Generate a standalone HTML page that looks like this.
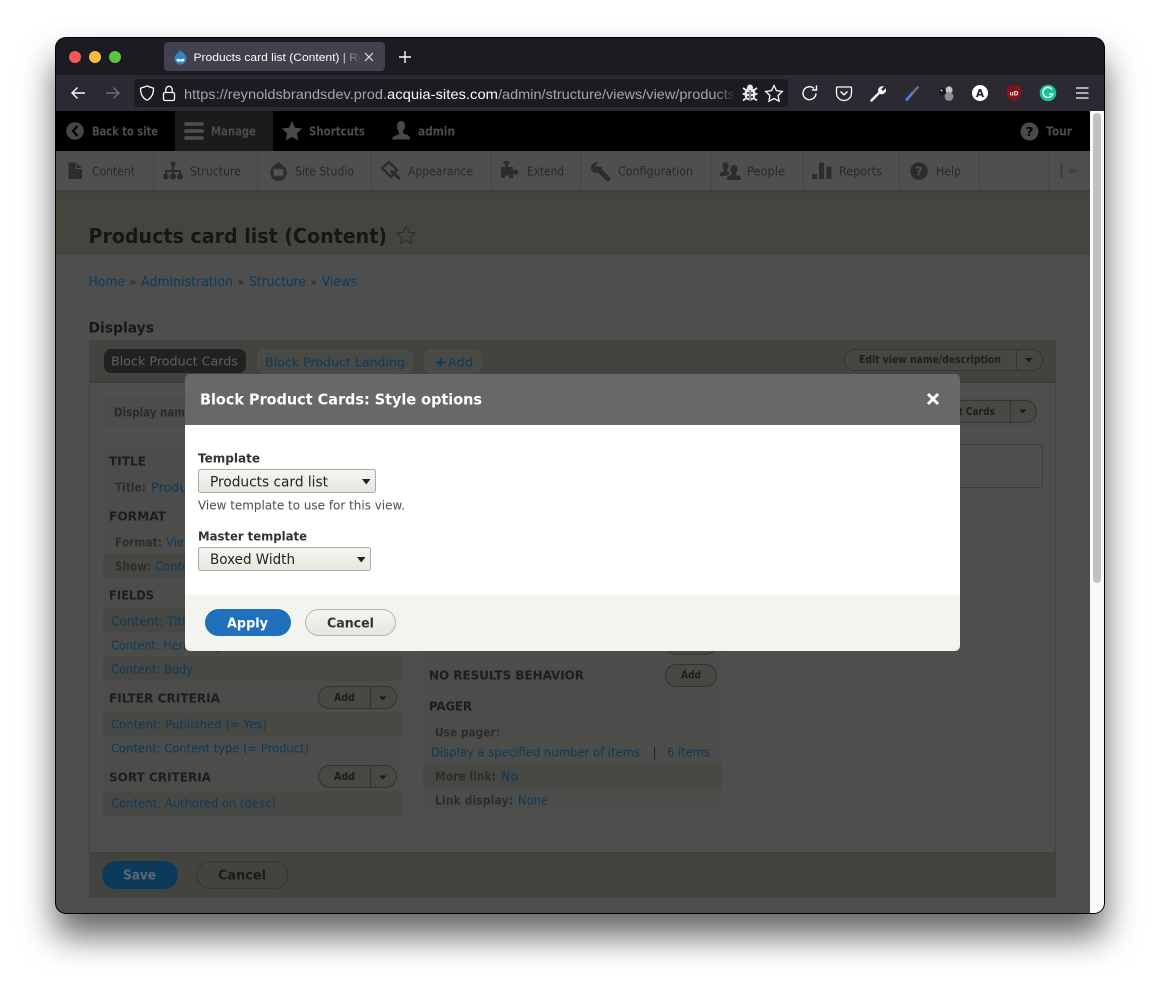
<!DOCTYPE html>
<html lang="en"><head><meta charset="utf-8"><title>Products card list (Content)</title>
<style>
html,body{margin:0;padding:0;background:#fff;width:1160px;height:987px;overflow:hidden}
svg{display:block}
text{font-family:"DejaVu Sans","Liberation Sans",sans-serif;white-space:pre}
.ui{font-family:"Liberation Sans",sans-serif}
.b{font-weight:bold}
.l{fill:#0c3a5b;font-size:12px}
.h{fill:#1d1d1d;font-size:12.5px;font-weight:bold}
.k{fill:#2d2d2d;font-size:12px;font-weight:bold}
.n{fill:#292929;font-size:12px}
.a{fill:#4d4d4d;font-size:12px;font-weight:bold}
</style></head><body>
<svg width="1160" height="987" viewBox="0 0 1160 987" xmlns="http://www.w3.org/2000/svg">
<defs>
<filter id="sh" x="-10%" y="-10%" width="120%" height="125%"><feDropShadow dx="0" dy="22" stdDeviation="17" flood-color="#000" flood-opacity=".6"/></filter>
<clipPath id="win"><rect x="56" y="38" width="1048" height="875" rx="10"/></clipPath>
<clipPath id="tabclip"><rect x="190" y="45" width="170" height="24"/></clipPath>
<clipPath id="urlclip"><rect x="180" y="82" width="555" height="24"/></clipPath>
<linearGradient id="fade1"><stop offset="0" stop-color="#42414d" stop-opacity="0"/><stop offset="1" stop-color="#42414d"/></linearGradient>
<linearGradient id="fade2"><stop offset="0" stop-color="#1c1b22" stop-opacity="0"/><stop offset="1" stop-color="#1c1b22"/></linearGradient>
<linearGradient id="sel" x1="0" y1="0" x2="0" y2="1"><stop offset="0" stop-color="#f6f6f2"/><stop offset="1" stop-color="#e7e7df"/></linearGradient>
<linearGradient id="btn" x1="0" y1="0" x2="0" y2="1"><stop offset="0" stop-color="#f5f5f2"/><stop offset="1" stop-color="#e6e6df"/></linearGradient>
</defs>

<rect x="55" y="37" width="1050" height="877" rx="11" fill="#000" filter="url(#sh)"/>
<g clip-path="url(#win)">
<!-- browser chrome -->
<rect x="56" y="38" width="1048" height="37" fill="#1c1b22"/>
<rect x="56" y="75" width="1048" height="36" fill="#2b2a33"/>
<circle cx="75" cy="57" r="6" fill="#f25a52"/><circle cx="95" cy="57" r="6" fill="#fdbb3c"/><circle cx="115" cy="57" r="6" fill="#5ac83f"/>
<rect x="164" y="42" width="221" height="29" rx="4" fill="#42414d"/>
<path d="M180.500 50c1 2.500 6 4 6 8.500a6 6 0 0 1-12 0c0-4.500 5-6 6-8.500z" fill="#2f86c5"/>
<path d="M176.500 59.500c1.500-1.500 3-.5 4 .2 1-.7 2.500-1.700 4-.2.500 1.800-2 3-4 1.500-2 1.500-4.500.3-4-1.500z" fill="#fff"/>
<g clip-path="url(#tabclip)"><text class="ui" x="193.500" y="61" font-size="11" fill="#fbfbfe" textLength="206" lengthAdjust="spacingAndGlyphs">Products card list (Content) | Reynolds</text></g>
<rect x="338" y="45" width="23" height="24" fill="url(#fade1)"/>
<path d="M365 53l8 8M373 53l-8 8" stroke="#e8e8ea" stroke-width="1.100" fill="none"/>
<path d="M405 51v12M399 57h12" stroke="#fbfbfe" stroke-width="1.400" fill="none"/>

<path d="M85 93H72M77.500 87.500L72 93l5.500 5.500" stroke="#fbfbfe" stroke-width="1.400" fill="none"/>
<path d="M119 93h-13M113.500 87.500L119 93l-5.500 5.500" stroke="#6f6e76" stroke-width="1.400" fill="none"/>
<rect x="134" y="79" width="654" height="28" rx="4" fill="#1c1b22"/>
<path d="M147 86l6.500 2.200c0 5-1.500 9.500-6.500 12-5-2.500-6.500-7-6.500-12z" stroke="#fbfbfe" stroke-width="1.300" fill="none"/>
<rect x="163.500" y="92.500" width="11" height="8" rx="1.500" stroke="#fbfbfe" stroke-width="1.300" fill="none"/>
<path d="M165.800 92.500v-3a3.200 3.200 0 0 1 6.400 0v3" stroke="#fbfbfe" stroke-width="1.300" fill="none"/>
<g clip-path="url(#urlclip)"><text class="ui" x="184" y="99" font-size="14" fill="#a4a4a8" textLength="203" lengthAdjust="spacingAndGlyphs">https://reynoldsbrandsdev.prod.</text>
<text class="ui" x="387" y="99" font-size="14" fill="#fbfbfe" textLength="111" lengthAdjust="spacingAndGlyphs">acquia-sites.com</text>
<text class="ui" x="498" y="99" font-size="14" fill="#a4a4a8" textLength="237" lengthAdjust="spacingAndGlyphs">/admin/structure/views/view/products</text></g>
<rect x="715" y="82" width="21" height="24" fill="url(#fade2)"/>
<!-- bug -->
<ellipse cx="750" cy="94" rx="5.500" ry="6.500" fill="#e8e8ea"/><circle cx="750" cy="87.500" r="3" fill="#e8e8ea"/>
<path d="M743 88l3.500 2.500M757 88l-3.500 2.500M742.500 94h15M743 100.500l3.500-2.500M757 100.500l-3.500-2.500" stroke="#e8e8ea" stroke-width="1.800"/>
<path d="M750 90v10" stroke="#1c1b22" stroke-width="1"/><circle cx="748" cy="93" r="1" fill="#1c1b22"/><circle cx="752" cy="93" r="1" fill="#1c1b22"/><circle cx="748" cy="97" r="1" fill="#1c1b22"/><circle cx="752" cy="97" r="1" fill="#1c1b22"/>
<path d="M774 85.500l2.500 5.200 5.800.8-4.200 4 1 5.700-5.100-2.700-5.100 2.700 1-5.700-4.200-4 5.800-.8z" stroke="#fbfbfe" stroke-width="1.300" fill="none"/>
<path d="M816 93.500a6.500 6.500 0 1 1-2-5M816.500 85.500v4.500H812" stroke="#fbfbfe" stroke-width="1.400" fill="none"/>
<path d="M837.500 87h13a1 1 0 0 1 1 1v5a7.500 7.500 0 0 1-15 0v-5a1 1 0 0 1 1-1z" stroke="#fbfbfe" stroke-width="1.300" fill="none"/><path d="M840.500 91.500l3.500 3.300 3.500-3.300" stroke="#fbfbfe" stroke-width="1.400" fill="none"/>
<path d="M871.500 100.500l7.500-7.500" stroke="#fbfbfe" stroke-width="2.400" stroke-linecap="round"/><path d="M878 91a4.500 4.500 0 0 1 6-4.500l-2.800 2.800 1.800 1.800 2.800-2.800A4.500 4.500 0 0 1 880 94z" fill="#fbfbfe"/>
<path d="M906 100.500l7-8" stroke="#4e82de" stroke-width="2.600"/><path d="M913 92.500l5.500-6" stroke="#6b6b6b" stroke-width="2.600"/>
<circle cx="949" cy="90" r="3.600" fill="#c4c4c4"/><circle cx="949" cy="96.500" r="4.400" fill="#8e8e8e"/><circle cx="942.500" cy="91.500" r="3.500" fill="#161616"/><circle cx="941.500" cy="90.500" r="1" fill="#ddd"/>
<circle cx="980" cy="93" r="8" fill="#fff"/><text class="b" x="976" y="97" font-size="10.500" fill="#222" textLength="8" lengthAdjust="spacingAndGlyphs">A</text>
<path d="M1007 86.500c3 0 5-.7 7-1.500 2 .8 4 1.500 7 1.500v7c0 4-3.500 6.500-7 7.500-3.500-1-7-3.500-7-7.500z" fill="#81151a"/>
<text class="b" x="1009.500" y="95.500" font-size="6.500" fill="#f0e0e0" textLength="9" lengthAdjust="spacingAndGlyphs">uD</text>
<circle cx="1048" cy="93" r="8.300" fill="#15c39a"/><path d="M1052 89.500a5 5 0 1 0 .7 4.500h-3.500" stroke="#e8f8f3" stroke-width="1.500" fill="none"/>
<path d="M1076 88h12.500M1076 93h12.500M1076 98h12.500" stroke="#fbfbfe" stroke-width="1.300"/>

<!-- page -->
<rect x="56" y="111" width="1034" height="802" fill="#4e4e4e"/>
<rect x="56" y="111" width="1034" height="40" fill="#000"/>
<rect x="175" y="111" width="98" height="40" fill="#1b1b1b"/>
<circle cx="75" cy="131" r="8.800" fill="#464646"/><path d="M77.500 126l-4.500 5 4.500 5" stroke="#000" stroke-width="2.300" fill="none"/>
<path d="M186 124h16M186 131h16M186 138h16" stroke="#4e4e4e" stroke-width="3.800" stroke-linecap="round"/>
<path d="M292 121l3 6.800 7.300.7-5.500 4.900 1.600 7.200-6.400-3.800-6.400 3.800 1.600-7.200-5.500-4.900 7.300-.7z" fill="#494949"/>
<path d="M401 121c2.800 0 4 2.200 4 4.800 0 2.300-1 4-2 5.200v2.200c2 1 6.500 1.600 7 4.800v1.500h-18V139c.5-3.200 5-3.800 7-4.800V132c-1-1.200-2-2.900-2-5.200 0-2.600 1.200-5.800 4-5.800z" fill="#494949"/>
<circle cx="1029.500" cy="131.500" r="9" fill="#4a4a4a"/><text class="b" x="1025.500" y="136" font-size="12.500" fill="#000" textLength="8" lengthAdjust="spacingAndGlyphs">?</text>
<text class="a" x="92" y="135.500" textLength="66" lengthAdjust="spacingAndGlyphs">Back to site</text>
<text class="a" x="211" y="135.500" textLength="45" lengthAdjust="spacingAndGlyphs">Manage</text>
<text class="a" x="309" y="135.500" textLength="56" lengthAdjust="spacingAndGlyphs">Shortcuts</text>
<text class="a" x="418" y="135.500" textLength="37" lengthAdjust="spacingAndGlyphs">admin</text>
<text class="a" x="1046" y="135.500" textLength="26" lengthAdjust="spacingAndGlyphs">Tour</text>

<!-- nav -->
<rect x="56" y="151" width="1034" height="39" fill="#4f4f4f"/>
<rect x="56" y="190" width="1034" height="3" fill="#3f403c"/>
<path d="M154 151v39M258 151v39M371 151v39M491 151v39M581 151v39M711 151v39M803 151v39M899 151v39M979 151v39M1049 151v39" stroke="#454545" stroke-width="1"/>
<path d="M68.500 162.500h7.500l6 6v10.500h-13.500z" fill="#2c2c2c"/><path d="M76 162v6.500h6.500" stroke="#4f4f4f" stroke-width="1" fill="none"/>
<g fill="#2c2c2c"><circle cx="173" cy="164" r="2.500"/><circle cx="166" cy="176.500" r="3"/><circle cx="173" cy="176.500" r="3"/><circle cx="180" cy="176.500" r="3"/></g><path d="M173 164v12M166 176v-5h14v5" stroke="#2c2c2c" stroke-width="2" fill="none"/>
<path d="M278.500 161.500c1 2 3.500 3 5 4.500a8.300 8.300 0 1 1-10 0c1.500-1.500 4-2.500 5-4.500z" fill="#2c2c2c"/><rect x="273.500" y="169" width="10" height="7" fill="#555" stroke="#3a3a3a"/>
<path d="M382 168l7-6 8 8-6 7z" fill="none" stroke="#2c2c2c" stroke-width="2.400"/><path d="M391 171l9 8" stroke="#2c2c2c" stroke-width="3"/>
<path d="M501 167h4v-3h-1.500v-3h6v3H508v3h5v3.500c2-1.500 5.500-.5 5.500 1.800s-3.500 3.300-5.500 1.700v4h-4v-2.500h-4v2.500h-4z" fill="#2c2c2c"/>
<path d="M597.500 168.500l10.500 10.500" stroke="#2c2c2c" stroke-width="4.800" stroke-linecap="round"/>
<path d="M591 168a6 6 0 0 1 7.500-5.800l-3.300 3.300.8 2.700 2.700.8 3.300-3.300a6 6 0 0 1-9 6.200A6 6 0 0 1 591 168z" fill="#2c2c2c"/>
<g fill="#2c2c2c"><path d="M725 162c2.500 0 3.500 2 3.500 4 0 1.600-.7 3-1.500 4v1.500l3 1.500-4 3h-6v-2c0-2 3-2 4-3V170c-.8-1-1.500-2.400-1.500-4 0-2 .5-4 2.500-4z"/><path d="M734 165c2.500 0 3.500 2 3.500 4.200 0 1.600-.7 3-1.500 4v1.500c1.500.7 5 1.200 5 3.800v1.500h-14v-1.500c0-2.600 3.500-3.100 5-3.800v-1.500c-.8-1-1.500-2.400-1.500-4 0-2.200 1-4.200 3.500-4.200z"/></g>
<path d="M812 174h5v5h-5zM819 162.500h5V179h-5zM826.500 166.500h5V179h-5z" fill="#2c2c2c"/>
<circle cx="919" cy="171" r="8.800" fill="#2c2c2c"/><text class="b" x="915" y="175.500" font-size="12.500" fill="#4f4f4f" textLength="8" lengthAdjust="spacingAndGlyphs">?</text>
<path d="M1061.500 163v15" stroke="#414141" stroke-width="3"/><path d="M1068 171l4.500-4v2.500h5.500v3h-5.500v2.500z" fill="#414141"/>
<text class="n" x="92" y="175.300" textLength="43" lengthAdjust="spacingAndGlyphs">Content</text>
<text class="n" x="190" y="175.300" textLength="51" lengthAdjust="spacingAndGlyphs">Structure</text>
<text class="n" x="295" y="175.300" textLength="59" lengthAdjust="spacingAndGlyphs">Site Studio</text>
<text class="n" x="408" y="175.300" textLength="65" lengthAdjust="spacingAndGlyphs">Appearance</text>
<text class="n" x="527" y="175.300" textLength="37" lengthAdjust="spacingAndGlyphs">Extend</text>
<text class="n" x="618" y="175.300" textLength="75" lengthAdjust="spacingAndGlyphs">Configuration</text>
<text class="n" x="747" y="175.300" textLength="38" lengthAdjust="spacingAndGlyphs">People</text>
<text class="n" x="839" y="175.300" textLength="43" lengthAdjust="spacingAndGlyphs">Reports</text>
<text class="n" x="936" y="175.300" textLength="25" lengthAdjust="spacingAndGlyphs">Help</text>

<!-- header -->
<rect x="56" y="193" width="1034" height="62" fill="#454540"/>
<text class="b" x="88.500" y="243" font-size="20.500" fill="#161616" textLength="298.500" lengthAdjust="spacingAndGlyphs">Products card list (Content)</text>
<path d="M406 226.500l2.700 5.700 6.300.8-4.600 4.300 1.200 6.200-5.600-3-5.600 3 1.200-6.200-4.600-4.300 6.300-.8z" stroke="#2a2a28" stroke-width="1" fill="none"/>

<text class="l" x="88.500" y="286" textLength="36.500" lengthAdjust="spacingAndGlyphs" style="font-size:13px">Home</text>
<text x="129.500" y="285.500" font-size="11" fill="#222">»</text>
<text class="l" x="141" y="286" textLength="92" lengthAdjust="spacingAndGlyphs" style="font-size:13px">Administration</text>
<text x="237.500" y="285.500" font-size="11" fill="#222">»</text>
<text class="l" x="249" y="286" textLength="57" lengthAdjust="spacingAndGlyphs" style="font-size:13px">Structure</text>
<text x="310.500" y="285.500" font-size="11" fill="#222">»</text>
<text class="l" x="322" y="286" textLength="35" lengthAdjust="spacingAndGlyphs" style="font-size:13px">Views</text>
<text class="b" x="88.500" y="332.500" font-size="14.500" fill="#181818" textLength="65.500" lengthAdjust="spacingAndGlyphs">Displays</text>

<!-- panel -->
<rect x="89.500" y="340.500" width="966" height="557" fill="#4e4e4e" stroke="#434343"/>
<rect x="90" y="341" width="965" height="41" fill="#43433f"/>
<path d="M90 382.500h965" stroke="#3c3c3a"/>
<rect x="104" y="349" width="142" height="24" rx="7" fill="#212121"/>
<text x="111" y="365.500" font-size="12.500" fill="#5f5f5f" textLength="127" lengthAdjust="spacingAndGlyphs">Block Product Cards</text>
<rect x="258" y="350" width="154" height="23" rx="7" fill="#494946" stroke="#505050"/>
<text x="265" y="366.500" font-size="12.500" fill="#0c3a5b" textLength="140" lengthAdjust="spacingAndGlyphs">Block Product Landing</text>
<rect x="425" y="350" width="56" height="23" rx="7" fill="#494946" stroke="#505050"/>
<path d="M440.500 358v9M436 362.500h9" stroke="#0c3a5b" stroke-width="2"/>
<text x="448" y="366.500" font-size="12.500" fill="#0c3a5b" textLength="25" lengthAdjust="spacingAndGlyphs">Add</text>
<rect x="844.500" y="349.500" width="198" height="21" rx="10.500" fill="#464642" stroke="#353533"/>
<path d="M1016.500 350v20" stroke="#353533"/><path d="M1025 358h7.500l-3.750 4z" fill="#1a1a1a"/>
<text class="b" x="859" y="363" font-size="10.500" fill="#1f1f1f" textLength="142" lengthAdjust="spacingAndGlyphs">Edit view name/description</text>

<rect x="103.500" y="395.500" width="934" height="33" fill="#4c4c4a" stroke="#515151"/>
<text class="b" x="114" y="416.500" font-size="12" fill="#2b2b2b" textLength="78" lengthAdjust="spacingAndGlyphs">Display name</text>
<rect x="880.500" y="400.500" width="156" height="22" rx="11" fill="#484845" stroke="#353533"/>
<path d="M1010.500 401v21" stroke="#353533"/><path d="M1019 409.500h7.500l-3.750 4z" fill="#1a1a1a"/>
<text class="b" x="892" y="415" font-size="10.500" fill="#1f1f1f" textLength="103" lengthAdjust="spacingAndGlyphs">Block Product Cards</text>
<rect x="900.500" y="444.500" width="142" height="43" rx="2" fill="none" stroke="#3c3c3c"/>

<!-- left column -->
<rect x="103" y="445" width="299" height="371" fill="#4c4c4a" stroke="#515151"/>
<path d="M103 499h299" stroke="#515151"/>
<rect x="103" y="554" width="299" height="24" fill="#474744"/>
<rect x="103" y="609" width="299" height="24" fill="#474744"/>
<rect x="103" y="657" width="299" height="24" fill="#474744"/>
<rect x="103" y="712" width="299" height="24" fill="#474744"/>
<rect x="103" y="791" width="299" height="25" fill="#474744"/>
<text class="h" x="109" y="465.500" textLength="37" lengthAdjust="spacingAndGlyphs">TITLE</text>
<text class="k" x="115" y="491.500" textLength="31" lengthAdjust="spacingAndGlyphs">Title:</text>
<text class="l" x="151" y="491.500" textLength="110" lengthAdjust="spacingAndGlyphs">Products card list</text>
<text class="h" x="109" y="520.500" textLength="57" lengthAdjust="spacingAndGlyphs">FORMAT</text>
<text class="k" x="115" y="546.500" textLength="47" lengthAdjust="spacingAndGlyphs">Format:</text>
<text class="l" x="166" y="546.500" textLength="90" lengthAdjust="spacingAndGlyphs">Views Template</text>
<text class="k" x="115" y="570.500" textLength="36" lengthAdjust="spacingAndGlyphs">Show:</text>
<text class="l" x="155" y="570.500" textLength="46" lengthAdjust="spacingAndGlyphs">Content</text>
<text class="h" x="109" y="599.500" textLength="45" lengthAdjust="spacingAndGlyphs">FIELDS</text>
<text class="l" x="111" y="625.500" textLength="82" lengthAdjust="spacingAndGlyphs">Content: Title</text>
<text class="l" x="111" y="649.500" textLength="118" lengthAdjust="spacingAndGlyphs">Content: Hero Image</text>
<text class="l" x="111" y="673.500" textLength="82" lengthAdjust="spacingAndGlyphs">Content: Body</text>
<text class="h" x="109" y="702.500" textLength="111" lengthAdjust="spacingAndGlyphs">FILTER CRITERIA</text>
<text class="l" x="111" y="728.500" textLength="156" lengthAdjust="spacingAndGlyphs">Content: Published (= Yes)</text>
<text class="l" x="111" y="752.500" textLength="198" lengthAdjust="spacingAndGlyphs">Content: Content type (= Product)</text>
<text class="h" x="109" y="781.500" textLength="102" lengthAdjust="spacingAndGlyphs">SORT CRITERIA</text>
<text class="l" x="111" y="807.500" textLength="165" lengthAdjust="spacingAndGlyphs">Content: Authored on (desc)</text>
<g><rect x="318.500" y="686.500" width="78" height="22" rx="11" fill="#484845" stroke="#333331"/><path d="M370.500 687v21" stroke="#333331"/><path d="M379 696.500h7.500l-3.750 4z" fill="#1a1a1a"/><text class="b" x="334" y="701" font-size="10.500" fill="#1c1c1c" textLength="21" lengthAdjust="spacingAndGlyphs">Add</text></g>
<g><rect x="318.500" y="765.500" width="78" height="22" rx="11" fill="#484845" stroke="#333331"/><path d="M370.500 766v21" stroke="#333331"/><path d="M379 775.500h7.500l-3.750 4z" fill="#1a1a1a"/><text class="b" x="334" y="780" font-size="10.500" fill="#1c1c1c" textLength="21" lengthAdjust="spacingAndGlyphs">Add</text></g>

<!-- right column -->
<rect x="423" y="445" width="299" height="366" fill="#4c4c4a" stroke="#515151"/>
<path d="M423 665h299M423 696h299M423 655h299" stroke="#515151"/>
<rect x="423" y="764" width="299" height="24" fill="#474744"/>
<rect x="665.500" y="632.500" width="51" height="22" rx="11" fill="#484845" stroke="#333331"/>
<rect x="665.500" y="664.500" width="51" height="22" rx="11" fill="#484845" stroke="#333331"/>
<text class="b" x="681" y="678.500" font-size="10.500" fill="#1c1c1c" textLength="20" lengthAdjust="spacingAndGlyphs">Add</text>
<text class="h" x="429" y="679.500" textLength="155" lengthAdjust="spacingAndGlyphs">NO RESULTS BEHAVIOR</text>
<text class="h" x="429" y="710.500" textLength="43" lengthAdjust="spacingAndGlyphs">PAGER</text>
<text class="k" x="435" y="736.500" textLength="65" lengthAdjust="spacingAndGlyphs">Use pager:</text>
<text class="l" x="431" y="756.500" textLength="209" lengthAdjust="spacingAndGlyphs">Display a specified number of items</text>
<text x="652.500" y="756.500" font-size="12" fill="#222">|</text>
<text class="l" x="667" y="756.500" textLength="43" lengthAdjust="spacingAndGlyphs">6 items</text>
<text class="k" x="435" y="780.500" textLength="61" lengthAdjust="spacingAndGlyphs">More link:</text>
<text class="l" x="501" y="780.500" textLength="17" lengthAdjust="spacingAndGlyphs">No</text>
<text class="k" x="435" y="804.500" textLength="78" lengthAdjust="spacingAndGlyphs">Link display:</text>
<text class="l" x="518" y="804.500" textLength="30" lengthAdjust="spacingAndGlyphs">None</text>

<!-- panel footer -->
<rect x="90" y="852" width="965" height="45" fill="#43433f"/>
<path d="M90 852.500h965" stroke="#3e3e3c"/>
<rect x="102" y="861" width="76" height="28" rx="14" fill="#0c3a5c"/>
<text class="b" x="123" y="879.500" font-size="13.500" fill="#60666a" textLength="33" lengthAdjust="spacingAndGlyphs">Save</text>
<rect x="196.500" y="861.500" width="91" height="27" rx="13.500" fill="#43433f" stroke="#353533"/>
<text class="b" x="218" y="879.500" font-size="13.500" fill="#1a1a1a" textLength="48" lengthAdjust="spacingAndGlyphs">Cancel</text>

<!-- scrollbar -->
<rect x="1090" y="111" width="14" height="802" fill="#fafafa"/>
<rect x="1093" y="113" width="8" height="470" rx="4" fill="#c1c1c1"/>
</g>

<!-- modal -->
<path d="M190 374h765a5 5 0 0 1 5 5v46H185v-46a5 5 0 0 1 5-5z" fill="#686868"/>
<rect x="185" y="425" width="775" height="170" fill="#fff"/>
<path d="M185 594.500h775v51.500a5 5 0 0 1-5 5H190a5 5 0 0 1-5-5z" fill="#f3f4ef"/>
<text class="b" x="200" y="404.500" font-size="15.500" fill="#fff" textLength="282" lengthAdjust="spacingAndGlyphs">Block Product Cards: Style options</text>
<path d="M928 394l10 10M938 394l-10 10" stroke="#fff" stroke-width="3"/>
<text class="b" x="198" y="462.500" font-size="12.500" fill="#333" textLength="62" lengthAdjust="spacingAndGlyphs">Template</text>
<rect x="198.500" y="469.500" width="177" height="23" rx="2" fill="url(#sel)" stroke="#aaa"/>
<text x="210" y="486.500" font-size="14" fill="#222" textLength="118" lengthAdjust="spacingAndGlyphs">Products card list</text>
<path d="M362 479h8.500l-4.250 5.500z" fill="#222"/>
<text x="198" y="509.500" font-size="12.500" fill="#4d4d4d" textLength="207" lengthAdjust="spacingAndGlyphs">View template to use for this view.</text>
<text class="b" x="198" y="540.500" font-size="12.500" fill="#333" textLength="109" lengthAdjust="spacingAndGlyphs">Master template</text>
<rect x="198.500" y="547.500" width="172" height="23" rx="2" fill="url(#sel)" stroke="#aaa"/>
<text x="210" y="564" font-size="14" fill="#222" textLength="85" lengthAdjust="spacingAndGlyphs">Boxed Width</text>
<path d="M357 557h8.500l-4.250 5.500z" fill="#222"/>
<rect x="205" y="609" width="86" height="27" rx="13.500" fill="#2170bd"/>
<text class="b" x="227" y="627.500" font-size="13.500" fill="#fff" textLength="41" lengthAdjust="spacingAndGlyphs">Apply</text>
<rect x="305.500" y="609.500" width="90" height="26" rx="13" fill="url(#btn)" stroke="#b5b5ae"/>
<text class="b" x="327" y="627.500" font-size="13.500" fill="#333" textLength="47" lengthAdjust="spacingAndGlyphs">Cancel</text>
</svg>
</body></html>
